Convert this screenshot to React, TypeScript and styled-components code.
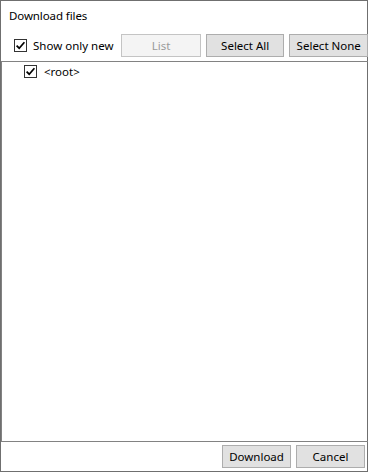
import React, { useState } from 'react';
import styled, { createGlobalStyle } from 'styled-components';

const GlobalStyle = createGlobalStyle`
  html, body {
    margin: 0;
    padding: 0;
    background: #ffffff;
  }
  body {
    font-family: "Noto Sans", "Open Sans", sans-serif;
    font-size: 12px;
    color: #000000;
  }
`;

const Window = styled.div`
  box-sizing: border-box;
  width: 368px;
  height: 472px;
  border: 1px solid #6f6f6f;
  background: #ffffff;
  display: flex;
  flex-direction: column;
`;

const Title = styled.div`
  box-sizing: border-box;
  height: 33px;
  padding: 0 0 4px 8px;
  display: flex;
  align-items: center;
  font-size: 11.5px;
  letter-spacing: -0.1px;
`;

const Toolbar = styled.div`
  height: 23px;
  display: flex;
  align-items: center;
  padding-left: 13px;
  margin-right: -1px;
`;

const CheckLabel = styled.label`
  display: flex;
  align-items: center;
  gap: 6px;
  font-size: 11.5px;
  width: 108px;
  cursor: default;
`;

const Box = styled.span`
  box-sizing: border-box;
  width: 13px;
  height: 13px;
  border: 1px solid #333333;
  background: #ffffff;
  display: flex;
  align-items: center;
  justify-content: center;
  flex-shrink: 0;
`;

const Button = styled.button<{ $w: number }>`
  box-sizing: border-box;
  width: ${p => p.$w}px;
  height: 23px;
  margin-right: 5px;
  padding: 0;
  background: #e1e1e1;
  border: 1px solid #adadad;
  font-family: inherit;
  font-size: 11.5px;
  color: #000000;
  &:last-child {
    margin-right: 0;
  }
  &:disabled {
    background: #f4f4f4;
    border-color: #c4c4c4;
    color: #9a9a9a;
  }
`;

const ListArea = styled.div`
  flex: 1;
  margin: 4px -1px 0 0;
  border-top: 1px solid #828282;
  border-left: 1px solid #828282;
  border-bottom: 1px solid #828282;
  padding: 2px 0 0 22px;
`;

const TreeRow = styled.div`
  display: flex;
  align-items: center;
  gap: 7px;
  height: 15px;
  font-size: 11.5px;
`;

const Footer = styled.div`
  height: 29px;
  display: flex;
  align-items: center;
  justify-content: flex-end;
  padding-right: 2px;
`;

const Check = ({ on }: { on: boolean }) => (
  <Box>
    {on && (
      <svg width="11" height="11" viewBox="0 0 11 11">
        <path d="M1.6 5.6 L4.2 8.2 L9.4 2.2" fill="none" stroke="#000" strokeWidth="1.7" />
      </svg>
    )}
  </Box>
);

export default function App() {
  const [onlyNew, setOnlyNew] = useState(true);
  const [root, setRoot] = useState(true);

  return (
    <>
      <GlobalStyle />
      <Window>
        <Title>Download files</Title>
        <Toolbar>
          <CheckLabel onClick={() => setOnlyNew(!onlyNew)}>
            <Check on={onlyNew} />
            Show only new
          </CheckLabel>
          <Button $w={80} disabled>List</Button>
          <Button $w={79}>Select All</Button>
          <Button $w={79}>Select None</Button>
        </Toolbar>
        <ListArea>
          <TreeRow onClick={() => setRoot(!root)}>
            <Check on={root} />
            &lt;root&gt;
          </TreeRow>
        </ListArea>
        <Footer>
          <Button $w={69}>Download</Button>
          <Button $w={69}>Cancel</Button>
        </Footer>
      </Window>
    </>
  );
}
